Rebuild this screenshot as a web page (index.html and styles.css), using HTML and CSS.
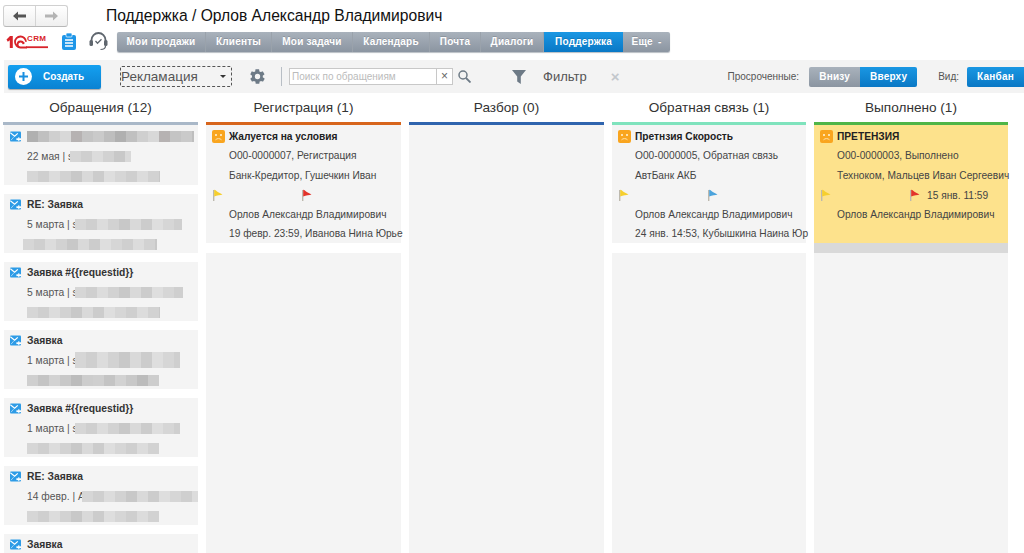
FILE: index.html
```html
<!DOCTYPE html>
<html lang="ru">
<head>
<meta charset="utf-8">
<title>Поддержка</title>
<link rel="stylesheet" href="styles.css">
</head>
<body>
<svg class="defs" width="0" height="0" aria-hidden="true">
  <symbol id="mail" viewBox="0 0 11 11">
    <rect x="0" y="0.5" width="11" height="10" rx="1" fill="#2d9be6"/>
    <path d="M0.300 1.800l4.300 3.400 3.200-2.800" fill="none" stroke="#fff" stroke-width="1.200"/>
    <path d="M1 9.200l2.600-3" fill="none" stroke="#bfe2f9" stroke-width="0.800"/>
    <path d="M6.400 8.200h4.600" fill="none" stroke="#fff" stroke-width="1.800"/>
    <path d="M8.800 6.200v4" fill="none" stroke="#fff" stroke-width="1"/>
  </symbol>
  <symbol id="sad" viewBox="0 0 13 13">
    <rect width="13" height="13" rx="2" fill="#f9a51f"/>
    <rect x="3" y="4" width="2" height="2" fill="#ffe2ad"/>
    <rect x="8" y="4" width="2" height="2" fill="#ffe2ad"/>
    <path d="M3.500 9.800c1.500-1.600 4.500-1.600 6 0" fill="none" stroke="#ffe2ad" stroke-width="1"/>
  </symbol>
  <symbol id="flag" viewBox="0 0 12 12">
    <rect x="1" y="1" width="1.4" height="11" fill="#bdb9ae"/>
    <path d="M2.2 0.8c1.5 0 2 1.4 3.6 2.2 1.600 0.8 3.200 1.700 4.700 2.400-1.800 0.600-5.500 1-8.300 2z" fill="currentColor"/>
  </symbol>
</svg>

<header class="top">
  <div class="history">
    <button class="hist-btn" aria-label="Назад"><svg width="13" height="10" viewBox="0 0 13 10"><path d="M0 5l5-4.500v3h8v3H5v3z" fill="#555"/></svg></button>
    <button class="hist-btn" aria-label="Вперёд"><svg width="13" height="10" viewBox="0 0 13 10"><path d="M13 5L8 .5v3H0v3h8v3z" fill="#b4b4b4"/></svg></button>
  </div>
  <h1 class="title">Поддержка / Орлов Александр Владимирович</h1>
</header>

<div class="navrow">
  <div class="logo">
    <svg width="42" height="16" viewBox="0 0 42 16">
      <path d="M0.500 5.500L4 2h2.800v12H3.800V6.200L1.800 7.800z" fill="#d8232a"/>
      <path d="M21 13.500H14.500a5.500 5.500 0 1 1 5.500-5.700M17.500 13.500h-3a3 3 0 1 1 3-3.400V8" fill="none" stroke="#d8232a" stroke-width="1.800"/>
      <rect x="20" y="12.300" width="22" height="1.800" fill="#d8232a"/>
    </svg>
    <span class="logo-crm">CRM</span>
  </div>
  <svg class="ico-clip" width="14" height="17" viewBox="0 0 14 17"><rect y="2" width="14" height="15" rx="2" fill="#1e96e8"/><rect x="4" y="0" width="6" height="4" rx="1" fill="#1e96e8" stroke="#fff" stroke-width=".7"/><path d="M3 7h8M3 10h8M3 13h8" stroke="#fff" stroke-width="1.300"/></svg>
  <svg class="ico-head" width="19" height="19" viewBox="0 0 19 19"><path d="M2.500 10V8a7 7 0 0 1 14 0v2" fill="none" stroke="#5f666e" stroke-width="1.800"/><rect x="0.500" y="8" width="3.500" height="6" rx="1.500" fill="#5f666e"/><rect x="15" y="8" width="3.500" height="6" rx="1.500" fill="#5f666e"/><path d="M6.500 9l2 2.300 4-4" fill="none" stroke="#5f666e" stroke-width="1.300"/><path d="M16.500 14c0 2.500-2.500 3.500-5 3.500" fill="none" stroke="#5f666e" stroke-width="1.200"/></svg>
  <nav class="nav">
    <a class="nav-item n1">Мои продажи</a>
    <a class="nav-item n2">Клиенты</a>
    <a class="nav-item n3">Мои задачи</a>
    <a class="nav-item n4">Календарь</a>
    <a class="nav-item n5">Почта</a>
    <a class="nav-item n6">Диалоги</a>
    <a class="nav-item n7 active">Поддержка</a>
    <a class="nav-item n8">Еще <span class="caret-dash">-</span></a>
  </nav>
</div>

<div class="toolbar">
  <button class="create">
    <svg width="17" height="17" viewBox="0 0 17 17"><circle cx="8.500" cy="8.500" r="8.500" fill="#fff"/><path d="M8.500 4v9M4 8.500h9" stroke="#1a8fe0" stroke-width="2"/></svg>
    <span>Создать</span>
  </button>
  <div class="select"><span>Рекламация</span><i class="select-caret"></i></div>
  <svg class="gear" width="17" height="17" viewBox="0 0 24 24"><path fill="#6d7a86" d="M19.400 13c.1-.3.100-.7.100-1s0-.7-.1-1l2.200-1.700c.2-.2.300-.4.100-.7l-2.100-3.600c-.1-.2-.4-.3-.6-.2l-2.600 1c-.5-.4-1.100-.7-1.700-1l-.4-2.700c0-.3-.3-.4-.5-.4H9.600c-.3 0-.5.100-.5.400l-.4 2.700c-.6.300-1.200.6-1.700 1l-2.600-1c-.2-.1-.5 0-.6.200L2 8.600c-.1.300-.1.500.1.700L4.300 11c0 .3-.1.700-.1 1s0 .7.100 1l-2.200 1.700c-.2.200-.3.400-.1.700l2.100 3.600c.1.200.4.300.6.200l2.600-1c.5.400 1.100.7 1.700 1l.4 2.700c0 .3.200.4.500.4h4.200c.2 0 .5-.1.500-.4l.4-2.700c.6-.3 1.200-.6 1.700-1l2.600 1c.2.100.5 0 .6-.2l2.100-3.600c.2-.3.100-.5-.1-.7zM12 15.800a3.800 3.800 0 1 1 0-7.600 3.800 3.800 0 0 1 0 7.600z"/></svg>
  <i class="sep"></i>
  <div class="search"><span class="search-ph">Поиск по обращениям</span><span class="search-x">×</span></div>
  <svg class="mag" width="13" height="13" viewBox="0 0 13 13"><circle cx="5" cy="5" r="4" fill="none" stroke="#6d7a86" stroke-width="1.500"/><path d="M8 8l4.500 4.500" stroke="#6d7a86" stroke-width="1.800"/></svg>
  <svg class="funnel" width="14" height="14" viewBox="0 0 14 14"><path d="M0 0h14L8.800 6.500V14L5.200 11.500v-5z" fill="#6d7a86"/></svg>
  <span class="filter-label">Фильтр</span>
  <span class="filter-x">×</span>
  <div class="tool-right">
    <span class="tool-label">Просроченные:</span>
    <div class="toggle">
      <span class="tog grey">Внизу</span><span class="tog blue">Вверху</span>
    </div>
    <span class="tool-label vid">Вид:</span>
    <span class="tog blue kanban">Канбан</span>
  </div>
</div>

<main class="board">
  <section class="col">
    <h2 class="col-title">Обращения (12)</h2>
    <div class="col-line c-grey"></div>
    <div class="req-list">
      <article class="req">
        <div class="req-line"><svg class="req-ico"><use href="#mail"/></svg><span class="blur dark w167"></span></div>
        <div class="req-line sub"><span>22 мая | s</span><span class="blur w61"></span></div>
        <div class="req-line sub"><span class="blur w133"></span></div>
      </article>
      <article class="req">
        <div class="req-line"><svg class="req-ico"><use href="#mail"/></svg><b>RE: Заявка</b></div>
        <div class="req-line sub"><span>5 марта | s</span><span class="blur w107"></span></div>
        <div class="req-line sub shift"><span class="blur w134"></span></div>
      </article>
      <article class="req">
        <div class="req-line"><svg class="req-ico"><use href="#mail"/></svg><b>Заявка #{{requestid}}</b></div>
        <div class="req-line sub"><span>5 марта | s</span><span class="blur w108"></span></div>
        <div class="req-line sub"><span class="blur w133"></span></div>
      </article>
      <article class="req">
        <div class="req-line"><svg class="req-ico"><use href="#mail"/></svg><b>Заявка</b></div>
        <div class="req-line sub"><span>1 марта | s</span><span class="blur tall w105"></span></div>
        <div class="req-line sub"><span class="blur mid w132"></span></div>
      </article>
      <article class="req">
        <div class="req-line"><svg class="req-ico"><use href="#mail"/></svg><b>Заявка #{{requestid}}</b></div>
        <div class="req-line sub"><span>1 марта | s</span><span class="blur w105"></span></div>
        <div class="req-line sub"><span class="blur w132"></span></div>
      </article>
      <article class="req">
        <div class="req-line"><svg class="req-ico"><use href="#mail"/></svg><b>RE: Заявка</b></div>
        <div class="req-line sub"><span>14 февр. | А</span><span class="blur w121"></span></div>
        <div class="req-line sub"><span class="blur w132"></span></div>
      </article>
      <article class="req last">
        <div class="req-line"><svg class="req-ico"><use href="#mail"/></svg><b>Заявка</b></div>
      </article>
    </div>
  </section>

  <section class="col">
    <h2 class="col-title">Регистрация (1)</h2>
    <div class="col-line c-orange"></div>
    <div class="lane">
      <article class="card">
        <div class="card-row head"><svg class="sad"><use href="#sad"/></svg><b>Жалуется на условия</b></div>
        <div class="card-row">О00-0000007, Регистрация</div>
        <div class="card-row">Банк-Кредитор, Гушечкин Иван</div>
        <div class="flags"><svg class="flag yellow"><use href="#flag"/></svg><svg class="flag red"><use href="#flag"/></svg></div>
        <div class="card-row">Орлов Александр Владимирович</div>
        <div class="card-row">19 февр. 23:59, Иванова Нина Юрье</div>
      </article>
      <div class="lane-gap"></div>
    </div>
  </section>

  <section class="col">
    <h2 class="col-title">Разбор (0)</h2>
    <div class="col-line c-blue"></div>
    <div class="lane"></div>
  </section>

  <section class="col">
    <h2 class="col-title">Обратная связь (1)</h2>
    <div class="col-line c-mint"></div>
    <div class="lane">
      <article class="card">
        <div class="card-row head"><svg class="sad"><use href="#sad"/></svg><b>Претнзия Скорость</b></div>
        <div class="card-row">О00-0000005, Обратная связь</div>
        <div class="card-row">АвтБанк АКБ</div>
        <div class="flags"><svg class="flag yellow"><use href="#flag"/></svg><svg class="flag sky"><use href="#flag"/></svg></div>
        <div class="card-row">Орлов Александр Владимирович</div>
        <div class="card-row">24 янв. 14:53, Кубышкина Наина Юр</div>
      </article>
      <div class="lane-gap"></div>
    </div>
  </section>

  <section class="col">
    <h2 class="col-title">Выполнено (1)</h2>
    <div class="col-line c-green"></div>
    <div class="lane">
      <article class="card done">
        <div class="card-row head"><svg class="sad"><use href="#sad"/></svg><b>ПРЕТЕНЗИЯ</b></div>
        <div class="card-row">О00-0000003, Выполнено</div>
        <div class="card-row">Техноком, Мальцев Иван Сергеевич</div>
        <div class="flags"><svg class="flag yellow"><use href="#flag"/></svg><svg class="flag red"><use href="#flag"/></svg><span class="flag-date">15 янв. 11:59</span></div>
        <div class="card-row">Орлов Александр Владимирович</div>
      </article>
      <div class="lane-gap grey"></div>
    </div>
  </section>
</main>
</body>
</html>
```

FILE: styles.css
```css
* { box-sizing: border-box; }
html, body { margin: 0; height: 553px; overflow: hidden; background: #fff; }
body { font-family: "Liberation Sans", Arial, sans-serif; color: #333; font-size: 11px; }
.defs { position: absolute; }

/* top */
.top { display: flex; align-items: center; height: 28px; padding: 3px 0 0 3px; }
.history { display: flex; width: 65px; height: 22px; background: linear-gradient(#fff, #efefef); border: 1px solid #d0d0d0; border-bottom-color: #b8b8b8; border-radius: 3px; }
.hist-btn { flex: 1; border: 0; padding: 0; background: none; display: flex; align-items: center; justify-content: center; }
.hist-btn + .hist-btn { border-left: 1px solid #d4d4d4; }
.title { margin: 0 0 0 38px; font-size: 15.650px; font-weight: normal; color: #111; line-height: 22px; }

.navrow { display: flex; align-items: center; height: 32px; padding: 0 0 5px 6px; }
.logo { position: relative; width: 42px; height: 16px; flex: none; }
.logo-crm { position: absolute; left: 21px; top: 0; font-size: 8px; font-weight: bold; color: #d8232a; letter-spacing: .4px; line-height: 10px; }
.ico-clip { margin-left: 14px; flex: none; }
.ico-head { margin-left: 13px; flex: none; }
.nav { display: flex; margin-left: 9px; height: 20px; border-radius: 2px; overflow: hidden; box-shadow: 0 1px 1px #b9bec4; }
.nav-item { display: flex; align-items: center; justify-content: center; font-size: 10px; font-weight: bold; color: #fff; letter-spacing: .2px; background: linear-gradient(#a9b2bc, #8b95a1); border-right: 1px solid #9aa2ab; text-shadow: 0 -1px 0 rgba(0,0,0,.15); white-space: nowrap; }
.n1 { width: 89px; } .n2 { width: 66px; } .n3 { width: 81px; } .n4 { width: 77px; }
.n5 { width: 51px; } .n6 { width: 63px; } .n7 { width: 79px; } .n8 { width: 47px; border-right: 0; }
.nav-item.active { background: linear-gradient(#1a97e3, #0a78c5); border-right: 0; }
.caret-dash { margin-left: 5px; }

/* toolbar */
.toolbar { display: flex; align-items: center; height: 33px; margin-left: 4px; background: #f3f3f3; padding-left: 4px; }
.create { display: flex; align-items: center; width: 93px; height: 24px; margin: 0; padding: 0 0 0 7px; border: 0; border-radius: 2px; background: linear-gradient(#14a0f0, #0a82d2); color: #fff; font: bold 10px "Liberation Sans", Arial, sans-serif; box-shadow: 0 1px 1px #aaa; }
.create span { margin-left: 11px; }
.select { display: flex; align-items: center; justify-content: space-between; width: 112px; height: 21px; margin-left: 19px; border: 1px dashed #555; border-radius: 2px; padding: 0 5px 0 0; font-size: 13.500px; color: #555; }
.select-caret { width: 0; height: 0; border: 3.500px solid transparent; border-top-color: #333; border-bottom: 0; }
.gear { margin-left: 17px; flex: none; }
.sep { width: 1px; height: 19px; margin-left: 15px; background: #b8bec5; }
.search { display: flex; align-items: center; justify-content: space-between; width: 164px; height: 17px; margin-left: 7px; border: 1px solid #c8c8c8; background: #fff; font-size: 10px; color: #bbb; padding-left: 2px; }
.search-x { width: 16px; height: 15px; border-left: 1px solid #c8c8c8; color: #666; text-align: center; line-height: 14px; font-size: 12px; }
.mag { margin-left: 5px; flex: none; }
.funnel { margin-left: 41px; flex: none; }
.filter-label { margin-left: 17px; font-size: 13px; color: #555; }
.filter-x { margin-left: 24px; font-size: 15px; font-weight: bold; color: #c3c7cc; line-height: 1; }
.tool-right { display: flex; align-items: center; margin-left: auto; }
.tool-label { font-size: 10px; color: #555; }
.toggle { display: flex; margin-left: 10px; }
.tog { display: flex; align-items: center; justify-content: center; height: 20px; font-size: 10px; font-weight: bold; color: #fff; letter-spacing: .2px; }
.tog.grey { width: 51px; background: linear-gradient(#a9b2bc, #8b95a1); border-radius: 2px 0 0 2px; }
.tog.blue { width: 57px; background: linear-gradient(#1a97e3, #0a78c5); border-radius: 0 2px 2px 0; }
.vid { margin-left: 21px; }
.tog.blue.kanban { width: 57px; margin-left: 8px; border-radius: 2px 0 0 2px; }

/* board */
.board { display: flex; gap: 8px; padding-left: 3px; height: 460px; overflow: hidden; }
.col { width: 195px; flex: none; display: flex; flex-direction: column; }
.col:nth-child(n+4) { width: 194px; }
.col-title { margin: 0; height: 29px; font-size: 13.600px; font-weight: normal; line-height: 30px; text-align: center; color: #333; white-space: nowrap; }
.col-line { height: 3px; flex: none; }
.c-grey { background: #a9b8c8; }
.c-orange { background: #d7651c; }
.c-blue { background: #2f64ae; }
.c-mint { background: #7fe3bd; }
.c-green { background: #4fb548; }

.req-list { display: flex; flex-direction: column; gap: 9px; padding-left: 1px; }
.req { height: 59px; flex: none; background: #f4f4f4; padding: 0 0 0 6px; overflow: hidden; }
.req:first-child { height: 60px; padding-top: 1px; }
.req.last { height: 19px; }
.req-line { display: flex; align-items: center; height: 20px; white-space: nowrap; font-size: 10.300px; }
.req-line b { color: #333; margin-left: 6px; font-size: 10.300px; }
.req-line.sub { padding-left: 17px; color: #555; }
.req-line.shift { padding-left: 13px; }
.req-ico { width: 11px; height: 11px; flex: none; }
.blur { display: block; height: 11px; flex: none; background: repeating-linear-gradient(90deg, #d6d6d6 0 11px, #cfcfcf 11px 22px, #dcdcdc 22px 33px, #d2d2d2 33px 44px, #c8c8c8 44px 55px, #d9d9d9 55px 66px, #cccccc 66px 77px, #dedede 77px 88px); }
.sub span + .blur { margin-left: -3px; }
.blur.dark { margin-left: 6px; background: repeating-linear-gradient(90deg, #b0b0b0 0 11px, #c0c0c0 11px 22px, #cfcfcf 22px 33px, #d8d8d8 33px 44px, #b6b2b2 44px 55px, #c4c4c4 55px 66px, #cacaca 66px 77px, #bebebe 77px 88px); }
.blur.tall { height: 16px; }
.blur.mid { height: 11px; background: repeating-linear-gradient(90deg, #cfcfcf 0 11px, #c4c4c4 11px 22px, #d2d2d2 22px 33px, #c8c8c8 33px 44px, #bcbcbc 44px 55px, #cdcdcd 55px 66px); }
.w61 { width: 61px; } .w105 { width: 105px; } .w107 { width: 107px; } .w108 { width: 108px; } .w121 { width: 121px; }
.w132 { width: 132px; } .w133 { width: 133px; } .w134 { width: 134px; } .w167 { width: 167px; }

.lane { flex: 1; background: #f4f4f4; }
.card { height: 118px; padding: 1.500px 0 0 23px; color: #444; }
.card.done { background: #fde28c; }
.card-row { position: relative; height: 19.600px; line-height: 19.600px; white-space: nowrap; font-size: 10.200px; }
.card-row b { color: #222; }
.sad { position: absolute; left: -17px; top: 3px; width: 13px; height: 13px; }
.flags { display: flex; align-items: center; height: 19.600px; margin-left: -17px; font-size: 10.200px; }
.flag { width: 12px; height: 12px; flex: none; }
.flag.yellow { color: #f6cf2e; margin-right: 77px; }
.flag.red { color: #e2332b; }
.flag.sky { color: #4ba3dc; }
.flag-date { margin-left: 6px; white-space: nowrap; }
.lane-gap { height: 10px; background: #fff; }
.lane-gap.grey { background: #d9d9d9; }
```
